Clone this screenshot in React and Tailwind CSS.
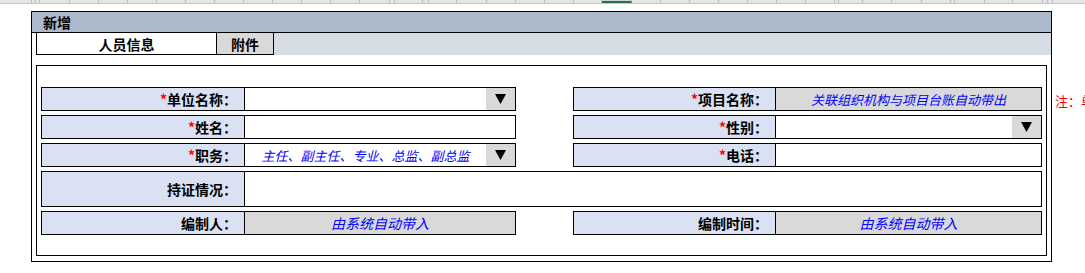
// 人员信息 新增表单（Excel 样式）
const colEdges = [32, 36, 40, 70, 99, 128, 157, 186, 215, 244, 273, 302, 331, 360, 390, 395, 423, 429, 457, 487, 516, 545, 574, 602, 632, 661, 690, 719, 748, 777, 806, 835, 839, 863, 892, 922, 951, 955, 985, 1013, 1043, 1048, 1053];

function ColumnStrip() {
    const cells = colEdges.map((x, i) => ({ x, w: x - (i === 0 ? 0 : colEdges[i - 1]) }));
    return (
        <div className="flex h-[4px] bg-[#e6e6e6] border-b border-[#c6c6c6]">
            {cells.map((c) => (
                <div
                    key={c.x}
                    className={c.x === 632 ? "h-full border-r border-[#c0c0c0] bg-[#d2d2d2] border-b-2 border-b-[#217346]" : "h-full border-r border-[#c0c0c0]"}
                    style={{ width: c.w }}
                />
            ))}
        </div>
    );
}

function Arrow() {
    return (
        <div className="w-[29px] h-full bg-[#d9d9d9] flex items-center justify-center">
            <svg width="11" height="10" viewBox="0 0 11 10">
                <polygon points="0,0 11,0 5.5,10" fill="#000" />
            </svg>
        </div>
    );
}

function Label({ text, req, w }) {
    return (
        <div className={`${w} h-full shrink-0 bg-[#d9e1f2] border-r border-black flex items-center justify-end pr-[7px] text-[14px] font-bold text-black leading-none`}>
            {req && <span className="text-[#ff0000]">*</span>}
            {text}：
        </div>
    );
}

function Field({ text, req, right, grey, dropdown, hint, tall }) {
    return (
        <div className={`${tall ? "h-[36px]" : "h-[24px]"} flex border border-black`}>
            <Label text={text} req={req} w={right ? "w-[202px]" : "w-[203px]"} />
            <div className={`flex-1 h-full flex items-center ${grey ? "bg-[#d9d9d9]" : "bg-white"}`}>
                <div className="flex-1 text-center italic text-[13px] text-[#0000ff] leading-none whitespace-nowrap">{hint}</div>
                {dropdown && <Arrow />}
            </div>
        </div>
    );
}

function App() {
    return (
        <div className="w-[1085px] h-[273px] overflow-hidden bg-white font-['Noto_Sans_CJK_SC','Microsoft_YaHei',sans-serif]">
            <ColumnStrip />
            <div className="flex items-start mt-[7px] ml-[31px]">
                <div className="w-[1021px] border border-black shrink-0">
                    <div className="h-[21px] bg-[#acb9ca] border-b border-black flex items-center pl-[11px] text-[14px] font-bold leading-none">新增</div>
                    <div className="h-[22px] flex">
                        <div className="w-[4px]" />
                        <div className="w-[181px] border-l border-r border-b border-black bg-white flex items-center justify-center text-[14px] font-bold leading-none">人员信息</div>
                        <div className="w-[57px] border-r border-b border-black bg-[#d9d9d9] flex items-center justify-center text-[14px] font-bold leading-none">附件</div>
                        <div className="flex-1 bg-[#d6dce4]" />
                    </div>
                    <div className="mt-[10px] mx-[4px] mb-[5px] border border-black px-[4px] pt-[21px] pb-[20px]">
                        <div className="grid grid-cols-[475px_469px] justify-between gap-y-[4px]">
                            <Field text="单位名称" req dropdown />
                            <Field text="项目名称" req right grey hint="关联组织机构与项目台账自动带出" />
                            <Field text="姓名" req />
                            <Field text="性别" req right dropdown />
                            <Field text="职务" req dropdown hint="主任、副主任、专业、总监、副总监" />
                            <Field text="电话" req right />
                            <div className="col-span-2">
                                <Field text="持证情况" tall />
                            </div>
                            <Field text="编制人" grey hint={<span className="text-[14px]">由系统自动带入</span>} />
                            <Field text="编制时间" right grey hint={<span className="text-[14px]">由系统自动带入</span>} />
                        </div>
                    </div>
                </div>
                <div className="mt-[77px] ml-[3px] h-[24px] flex items-center whitespace-nowrap text-[13px] text-[#ff0000] leading-none">注：单位名称请下拉选择</div>
            </div>
        </div>
    );
}

export default App;
